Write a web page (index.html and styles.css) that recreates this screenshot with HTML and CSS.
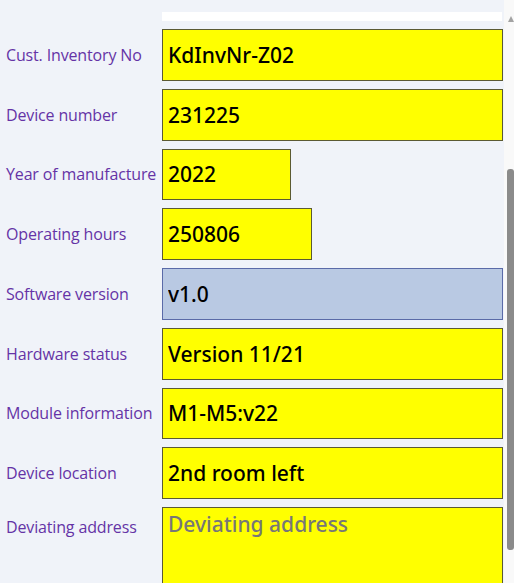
FILE: index.html
```html
<!DOCTYPE html>
<html>
<head>
<meta charset="utf-8">
<link rel="stylesheet" href="styles.css">
</head>
<body>
<div class="page">
  <main class="content">
    <div class="topbar-row"><div class="topbar"></div></div>
    <form class="form">
      <label class="label">Cust. Inventory No</label>
      <div class="field"><input class="input" value="KdInvNr-Z02"></div>

      <label class="label">Device number</label>
      <div class="field"><input class="input" value="231225"></div>

      <label class="label">Year of manufacture</label>
      <div class="field"><input class="input input-year" value="2022"></div>

      <label class="label">Operating hours</label>
      <div class="field"><input class="input input-hours" value="250806"></div>

      <label class="label">Software version</label>
      <div class="field"><input class="input input-readonly" value="v1.0" readonly></div>

      <label class="label">Hardware status</label>
      <div class="field"><input class="input" value="Version 11/21"></div>

      <label class="label">Module information</label>
      <div class="field"><input class="input" value="M1-M5:v22"></div>

      <label class="label">Device location</label>
      <div class="field"><input class="input" value="2nd room left"></div>

      <label class="label label-top">Deviating address</label>
      <div class="field"><textarea class="textarea" placeholder="Deviating address"></textarea></div>
    </form>
  </main>
  <aside class="scrollbar">
    <div class="arrow"></div>
    <div class="thumb"></div>
  </aside>
</div>
</body>
</html>
```

FILE: styles.css
```css
html, body {
  margin: 0;
  padding: 0;
  height: 100%;
  overflow: hidden;
}
body {
  background: #f0f3f9;
}
.page {
  display: flex;
  height: 583px;
}
.content {
  flex: 1;
  padding: 12px 1px 0 6px;
  overflow: hidden;
}
.topbar-row {
  padding-left: 156px;
  margin-bottom: 8px;
}
.topbar {
  height: 9px;
  background: #ffffff;
  margin-right: 1px;
}
.form {
  display: grid;
  grid-template-columns: 156px 1fr;
  row-gap: 8px;
  align-items: center;
}
.label {
  font-family: "Open Sans", "Noto Sans", sans-serif;
  font-size: 16px;
  letter-spacing: -0.15px;
  color: #6533a6;
  white-space: nowrap;
  line-height: 20px;
}
.label-top {
  align-self: start;
  padding-top: 10px;
}
.field {
  display: flex;
}
.input, .textarea {
  box-sizing: border-box;
  width: 100%;
  height: 51.75px;
  margin: 0;
  background: #ffff00;
  border: 1px solid #5b5a33;
  font-family: "Noto Sans", "Open Sans", sans-serif;
  font-size: 21px;
  font-weight: 500;
  color: #000;
  padding: 0 5px;
  outline: none;
  border-radius: 0;
}
.input-year { width: 129px; }
.input-hours { width: 150px; }
.input-readonly {
  background: #b9c9e3;
  border-color: #5a6aa8;
}
.textarea {
  height: 120px;
  padding: 2px 5px;
  resize: none;
  line-height: 28px;
}
.textarea::placeholder {
  color: #777777;
  opacity: 1;
}
.scrollbar {
  width: 10px;
  background: #f9f9f9;
  display: flex;
  flex-direction: column;
  align-items: center;
}
.arrow {
  margin-top: 16px;
  margin-left: 3px;
  width: 0;
  height: 0;
  border-left: 3.5px solid transparent;
  border-right: 3.5px solid transparent;
  border-bottom: 6px solid #a3a3a3;
}
.thumb {
  margin-top: 147px;
  margin-left: 3px;
  width: 7px;
  height: 381px;
  background: #8b8b8b;
  border-radius: 3px;
}
```
